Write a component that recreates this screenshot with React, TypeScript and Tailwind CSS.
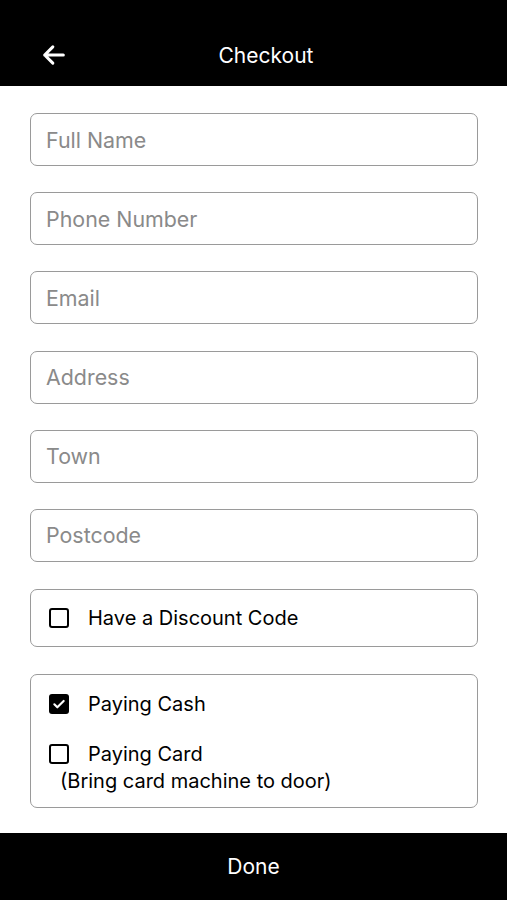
import { useState } from 'react'

const FIELDS = ['Full Name', 'Phone Number', 'Email', 'Address', 'Town', 'Postcode']

function Box({ checked }: { checked: boolean }) {
  return checked ? (
    <span className="flex h-[20px] w-[20px] items-center justify-center rounded-[3px] bg-black">
      <svg viewBox="0 0 24 24" className="h-[16px] w-[16px]" fill="none" stroke="white" strokeWidth="3.2" strokeLinecap="round" strokeLinejoin="round">
        <path d="M5 12.5l4.5 4.5L19 7.5" />
      </svg>
    </span>
  ) : (
    <span className="block h-[20px] w-[20px] rounded-[3px] border-2 border-black" />
  )
}

export default function App() {
  const [discount, setDiscount] = useState(false)
  const [cash, setCash] = useState(true)

  return (
    <div className="flex h-[900px] flex-col bg-white text-[20px] text-black" style={{ fontFamily: 'Inter, "Liberation Sans", sans-serif' }}>
      {/* Header */}
      <div className="relative flex h-[86px] shrink-0 items-end justify-center bg-black pb-[17px] pl-[25px] text-white">
        <button className="absolute left-[40px] bottom-[17px]">
          <svg viewBox="0 0 24 24" className="h-[28px] w-[28px]" fill="none" stroke="white" strokeWidth="2.6" strokeLinecap="round" strokeLinejoin="round">
            <path d="M20 12H4M11 5l-7 7 7 7" />
          </svg>
        </button>
        <span className="text-[21px] leading-[26px]">Checkout</span>
      </div>

      <div className="flex flex-1 flex-col gap-[26.2px] pl-[30px] pr-[29px] pt-[27px]">
        {FIELDS.map((f) => (
          <input
            key={f}
            placeholder={f}
            className="h-[53px] w-full rounded-[7px] border border-[#9a9a9a] px-[15px] text-[21.4px] outline-none placeholder:text-[#8a8a8a]"
          />
        ))}

        <button
          onClick={() => setDiscount(!discount)}
          className="mt-[1px] flex h-[58px] items-center gap-[19px] rounded-[7px] border border-[#9a9a9a] px-[18px] text-left"
        >
          <Box checked={discount} />
          <span>Have a Discount Code</span>
        </button>

        <div className="mt-[1px] flex h-[134px] flex-col rounded-[7px] border border-[#9a9a9a] px-[18px] pt-[16px]">
          <button onClick={() => setCash(true)} className="flex items-center gap-[19px] text-left">
            <Box checked={cash} />
            <span className="leading-[26px]">Paying Cash</span>
          </button>
          <button onClick={() => setCash(false)} className="mt-[24px] flex items-center gap-[19px] text-left">
            <Box checked={!cash} />
            <span className="leading-[26px]">Paying Card</span>
          </button>
          <span className="ml-[11px] leading-[28px]">(Bring card machine to door)</span>
        </div>
      </div>

      <button className="flex h-[67px] shrink-0 items-center justify-center bg-black text-[21px] text-white">Done</button>
    </div>
  )
}
